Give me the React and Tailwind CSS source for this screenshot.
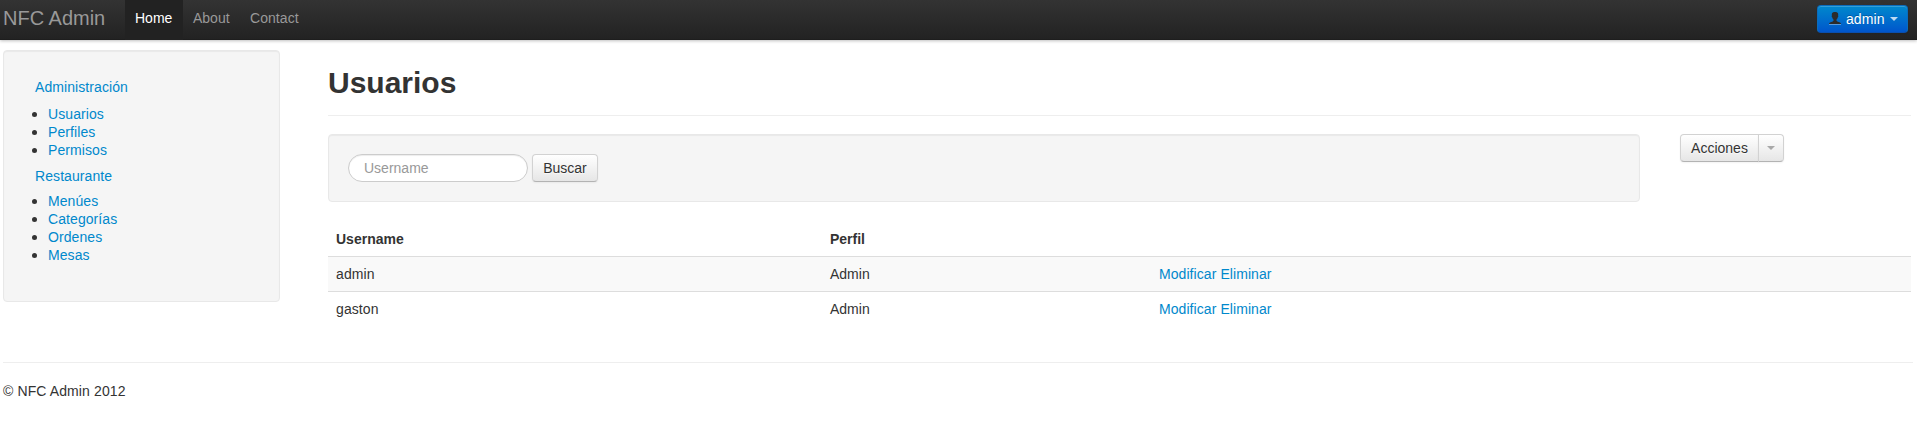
const sections = [
  { title: "Administración", items: ["Usuarios", "Perfiles", "Permisos"] },
  { title: "Restaurante", items: ["Menúes", "Categorías", "Ordenes", "Mesas"] },
];

const users = [
  { username: "admin", profile: "Admin" },
  { username: "gaston", profile: "Admin" },
];

const well =
  "rounded-[4px] border border-[#e8e8e8] bg-[#f5f5f5] shadow-[inset_0_1px_1px_rgba(0,0,0,0.05)]";
const button =
  "h-7 border border-[#d2d2d2] border-b-[#b3b3b3] bg-linear-to-b from-white to-[#e6e6e6] text-[#333333] [text-shadow:0_1px_1px_rgba(255,255,255,0.75)] shadow-[inset_0_1px_0_rgba(255,255,255,0.2),0_1px_2px_rgba(0,0,0,0.05)]";

function Caret({ className }) {
  return (
    <svg width="8" height="4" viewBox="0 0 8 4" className={className} aria-hidden="true">
      <path d="M0 0h8L4 4z" fill="currentColor" />
    </svg>
  );
}

function UserIcon() {
  return (
    <svg width="14" height="14" viewBox="0 0 14 14" aria-hidden="true">
      <path
        d="M4 1.200C4.500.3 5.700 0 7 0s2.500.3 3 1.200c.3.8.2 1.600.1 2.300.4.4.2 1.500-.4 1.900-.2.900-.6 1.600-1.200 2.100v1.300c.4.600 1.200.8 2 1.100 1.300.4 2.500.9 2.500 2.100H1c0-1.200 1.200-1.700 2.500-2.100.8-.3 1.600-.5 2-1.100V7.500C4.900 7 4.500 6.300 4.300 5.400c-.6-.4-.8-1.500-.4-1.900C3.800 2.800 3.700 2 4 1.200z"
        fill="#2b2b2b"
      />
      <path d="M1 12h12v1H1z" fill="#ffffff" fillOpacity="0.35" />
    </svg>
  );
}

function Navbar() {
  return (
    <header className="flex h-10 items-start bg-linear-to-b from-[#333333] to-[#222222] pr-[9px] pl-[3px] shadow-[0_1px_3px_rgba(0,0,0,0.25),inset_0_-1px_0_rgba(0,0,0,0.1)]">
      <a href="#" className="w-[122px] pt-2 text-[20px] leading-5 text-[#999999]">
        NFC Admin
      </a>
      <nav className="flex h-10 leading-[19px]">
        <a href="#" className="h-10 w-[58px] bg-[#222222] px-2.5 pt-[9px] text-white">Home</a>
        <a href="#" className="w-[57px] px-2.5 pt-[9px] text-[#999999]">About</a>
        <a href="#" className="px-2.5 pt-[9px] tracking-[0.06px] text-[#999999]">Contact</a>
      </nav>
      <button className="mt-[5px] ml-auto flex h-7 w-[91px] items-center rounded-[4px] border border-[#0a6cbd] border-b-[#0a4fae] bg-linear-to-b from-[#0088cc] to-[#0055cc] pl-[10px] text-white [text-shadow:0_-1px_0_rgba(0,0,0,0.25)] shadow-[inset_0_1px_0_rgba(255,255,255,0.2),0_1px_2px_rgba(0,0,0,0.05)]">
        <UserIcon />
        <span className="ml-1 leading-[18px] tracking-[0.08px]">admin</span>
        <Caret className="ml-[5px] opacity-75" />
      </button>
    </header>
  );
}

function Sidebar() {
  return (
    <aside className={`h-[252px] w-[277px] shrink-0 pt-[27px] pl-[19px] tracking-[0.08px] ${well}`}>
      {sections.map((section, i) => (
        <section key={section.title} className={i === 0 ? "mb-2" : ""}>
          <h3 className={i === 0 ? "mb-[9px] pl-[12px]" : "mb-[7px] pl-[12px]"}>
            <a href="#" className="text-[#0088cc]">{section.title}</a>
          </h3>
          <ul className="pl-[9px]">
            {section.items.map((item) => (
              <li key={item} className="flex items-center gap-[11px]">
                <span className="mt-px size-[5px] rounded-full bg-[#333333]" />
                <a href="#" className="text-[#0088cc]">{item}</a>
              </li>
            ))}
          </ul>
        </section>
      ))}
    </aside>
  );
}

function UsersTable() {
  return (
    <table className="mt-5 w-full table-fixed border-collapse text-left">
      <colgroup>
        <col className="w-[494px]" />
        <col className="w-[329px]" />
        <col />
      </colgroup>
      <thead>
        <tr>
          <th className="px-2 pt-2 pb-2 font-bold">Username</th>
          <th className="px-2 pt-2 pb-2 font-bold">Perfil</th>
          <th />
        </tr>
      </thead>
      <tbody>
        {users.map((user) => (
          <tr key={user.username} className="border-t border-[#dddddd] odd:bg-[#f9f9f9]">
            <td className="p-2 tracking-[0.1px]">{user.username}</td>
            <td className="p-2">{user.profile}</td>
            <td className="p-2 tracking-[0.07px] text-[#0088cc]">
              <a href="#">Modificar</a> <a href="#">Eliminar</a>
            </td>
          </tr>
        ))}
      </tbody>
    </table>
  );
}

export default function App() {
  return (
    <div className="min-h-[423px] bg-white font-['Liberation_Sans',Arial,sans-serif] text-[14px] leading-[18px] text-[#333333]">
      <Navbar />
      <div className="flex h-[322px] gap-12 pt-2.5 pr-1.5 pl-[3px]">
        <Sidebar />
        <main className="min-w-0 grow">
          <h1 className="mt-[15px] h-[50px] text-[30px] leading-9 font-bold">Usuarios</h1>
          <hr className="border-[#eeeeee]" />
          <div className="mt-[18px] flex items-start gap-10">
            <form className={`flex h-[68px] w-[1312px] gap-1 p-[19px] ${well}`}>
              <input
                placeholder="Username"
                className="h-7 w-[180px] rounded-[14px] border border-[#cccccc] bg-white px-[15px] leading-[18px] shadow-[inset_0_1px_1px_rgba(0,0,0,0.075)] placeholder:text-[#999999]"
              />
              <button type="button" className={`w-[66px] rounded-[4px] ${button}`}>Buscar</button>
            </form>
            <div className="flex">
              <button className={`w-[79px] rounded-l-[4px] ${button}`}>Acciones</button>
              <button className={`-ml-px flex w-[26px] items-center justify-center rounded-r-[4px] ${button}`}>
                <Caret className="text-black opacity-30" />
              </button>
            </div>
          </div>
          <UsersTable />
        </main>
      </div>
      <footer className="pr-1 pl-[3px]">
        <hr className="border-[#eeeeee]" />
        <p className="mt-[19px] tracking-[0.11px]">© NFC Admin 2012</p>
      </footer>
    </div>
  );
}
